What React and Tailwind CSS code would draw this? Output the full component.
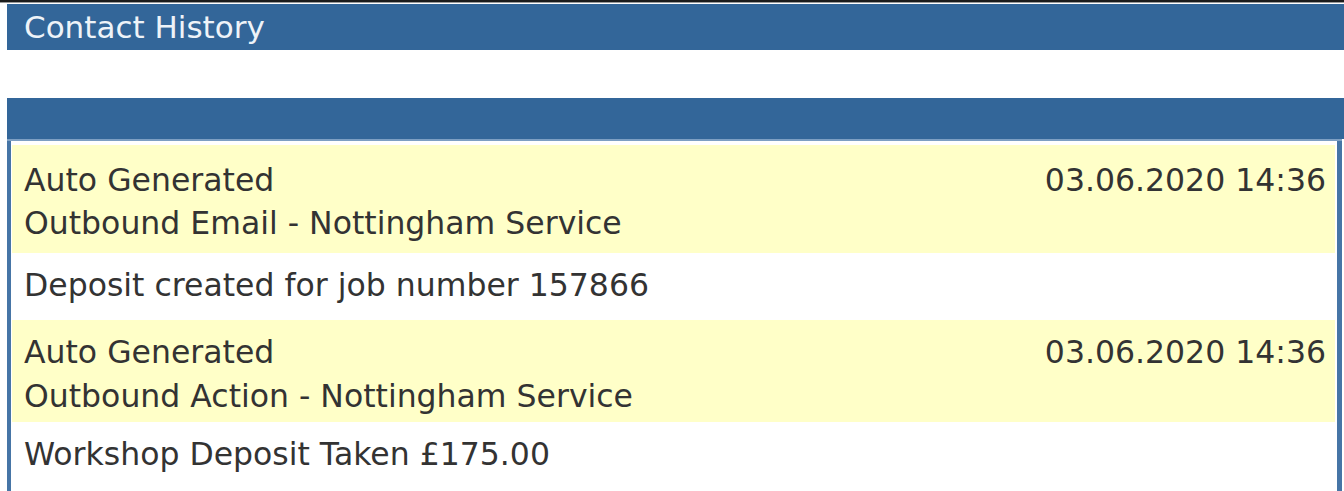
export default function App() {
  const font = { fontFamily: '"DejaVu Sans", Verdana, sans-serif' };
  return (
    <div className="w-[1344px] h-[491px] overflow-hidden bg-white" style={font}>
      <div className="h-[2px] bg-[#1c1c1c]" />
      <div className="h-[1px] bg-[#9a9a9a]" />
      <div className="h-[1px] bg-white" />
      <div className="ml-[7px] h-[46px] bg-[#336699] pl-[17px] flex items-center text-[31px] text-[#eef3f8] leading-none">
        Contact History
      </div>
      <div className="h-[48px]" />
      <div className="ml-[7px]">
        <div className="h-[41px] bg-[#336699]" />
        <div className="h-[2px] bg-[#7d9fc3] mr-[2px]" />
        <div className="mr-[2px] border-l-[4px] border-r-[5px] border-[#4675a6] pt-[4px] pl-[1px] pr-[2px] text-[31.5px] text-[#333333]">
          <div className="h-[108px] bg-[#ffffc8] pl-[12px] pr-[9px] pt-[14px] leading-[43px]">
            <div className="flex justify-between">
              <span>Auto Generated</span>
              <span>03.06.2020 14:36</span>
            </div>
            <div>Outbound Email - Nottingham Service</div>
          </div>
          <div className="h-[67px] bg-white pl-[12px] pt-[11px] leading-[43px]">
            Deposit created for job number 157866
          </div>
          <div className="h-[102px] bg-[#ffffc8] pl-[12px] pr-[9px] pt-[10px] leading-[44px]">
            <div className="flex justify-between">
              <span>Auto Generated</span>
              <span>03.06.2020 14:36</span>
            </div>
            <div>Outbound Action - Nottingham Service</div>
          </div>
          <div className="h-[80px] bg-white pl-[12px] pt-[11px] leading-[43px]">
            Workshop Deposit Taken £175.00
          </div>
        </div>
      </div>
    </div>
  );
}
